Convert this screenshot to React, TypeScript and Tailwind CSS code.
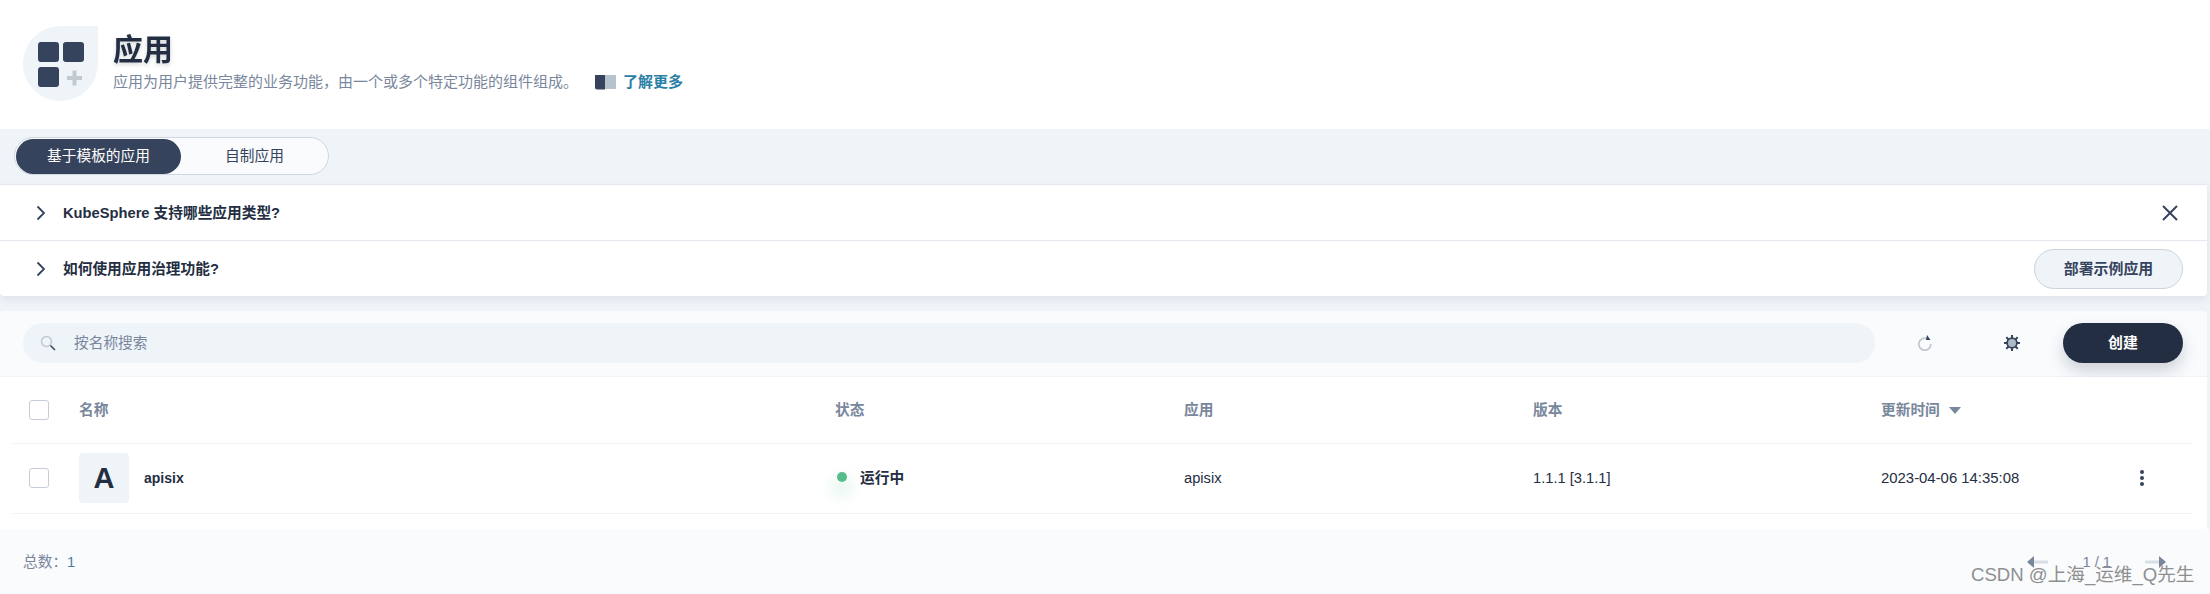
import React from "react";

function Chevron() {
  return (
    <svg width="12" height="16" viewBox="0 0 12 16" fill="none" stroke="#36435c" strokeWidth="1.8" className="shrink-0">
      <path d="M2.5 1.5 9 8l-6.5 6.5" />
    </svg>
  );
}

function Checkbox() {
  return <span className="block w-[20px] h-[20px] rounded-[3px] border border-[#c6cdd8] bg-white" />;
}

const cols = "grid grid-cols-[50px_756px_349px_349px_348px_1fr] items-center pl-[16px]";

export default function App() {
  return (
    <div
      className="w-[2210px] h-[594px] overflow-hidden bg-[#eff4f9] flex flex-col text-[14.7px] text-[#242e42] leading-[20px]"
      style={{ fontFamily: '"Liberation Sans", "Noto Sans CJK SC", sans-serif' }}
    >
      {/* Banner */}
      <header className="h-[129px] shrink-0 bg-white flex items-start pl-[23px] pt-[26px]">
        <div className="relative w-[75px] h-[75px] rounded-full rounded-tr-none bg-[#eff4f9] shrink-0">
          <svg width="75" height="75" viewBox="0 0 75 75" className="block">
            <rect x="15" y="16" width="21" height="20" rx="3" fill="#36435c" />
            <rect x="40" y="16" width="21" height="20" rx="3" fill="#36435c" />
            <rect x="15" y="41" width="21" height="20" rx="3" fill="#36435c" />
            <path d="M44 50h15v4H44zM49.5 44.500h4v15h-4z" fill="#c1c9d1" />
          </svg>
        </div>
        <div className="ml-[15px] flex flex-col">
          <h1 className="text-[30px] leading-[38px] font-bold text-[#242e42] mt-[5px] drop-shadow-[0_2px_2px_rgba(36,46,66,0.2)]">应用</h1>
          <div className="flex items-center mt-[3px] h-[20px]">
            <span className="text-[#79879c] text-[15px]">应用为用户提供完整的业务功能，由一个或多个特定功能的组件组成。</span>
            <svg width="21" height="16" viewBox="0 0 21 16" className="ml-[17px] shrink-0">
              <path d="M0 1h10v14.500H2a2 2 0 0 1-2-2z" fill="#36435c" />
              <path d="M10 1h11v14H10z" fill="#b6c2ce" />
            </svg>
            <span className="ml-[7px] font-bold text-[#2a7fa6] text-[15px]">了解更多</span>
          </div>
        </div>
      </header>

      {/* Tabs band */}
      <div className="h-[55px] shrink-0 pl-[14px] pt-[8px]">
        <div className="w-[315px] h-[38px] rounded-full border border-[#d1d7e0] bg-[#f9fbfd] flex items-center pl-px">
          <span className="w-[165px] h-[35px] rounded-full bg-[#36435c] text-white flex items-center justify-center">基于模板的应用</span>
          <span className="w-[147px] h-[35px] flex items-center justify-center text-[#36435c]">自制应用</span>
        </div>
      </div>

      {/* Help card */}
      <section className="shrink-0 mr-[3px] bg-white border-t border-[#e3e9ef] rounded-b-[4px] shadow-[0_4px_8px_0_rgba(36,46,66,0.08)]">
        <div className="h-[56px] flex items-center pl-[35px] pr-[27px] border-b border-[#e3e9ef]">
          <Chevron />
          <span className="ml-[16px] font-bold">KubeSphere 支持哪些应用类型?</span>
          <svg width="18" height="18" viewBox="0 0 18 18" fill="none" stroke="#36435c" strokeWidth="2" className="ml-auto mr-[1px]">
            <path d="M2 2l14 14M16 2 2 16" />
          </svg>
        </div>
        <div className="h-[55px] flex items-center pl-[35px] pr-[24px]">
          <Chevron />
          <span className="ml-[16px] font-bold">如何使用应用治理功能?</span>
          <button className="ml-auto w-[149px] h-[40px] rounded-full bg-[#eff4f9] border border-[#ccd3db] font-bold text-[#36435c] text-[14.9px]">部署示例应用</button>
        </div>
      </section>

      {/* Toolbar */}
      <section className="mt-[15px] shrink-0 mr-[3px] h-[66px] bg-[#f9fbfd] rounded-t-[4px] border-b border-[#eff4f9] flex items-center pl-[23px] pr-[24px] pb-[1px]">
        <div className="w-[1852px] h-[40px] rounded-full bg-[#eff4f9] flex items-center pl-[17px]">
          <svg width="16" height="16" viewBox="0 0 16 16" fill="none" className="shrink-0">
            <circle cx="6.500" cy="6.500" r="5" stroke="#c1c9d1" strokeWidth="1.500" />
            <path d="M10.500 10.500 15 15" stroke="#36435c" strokeWidth="1.500" />
          </svg>
          <span className="ml-[18px] text-[#79879c]">按名称搜索</span>
        </div>
        <svg width="14" height="16" viewBox="0 0 14 16" fill="none" className="ml-[43px] shrink-0">
          <path d="M9 3.600A6 6 0 1 0 12.800 9" stroke="#c1c9d1" strokeWidth="1.800" />
          <path d="M9 0l3.500 5H8z" fill="#36435c" />
        </svg>
        <svg width="18" height="18" viewBox="0 0 18 18" className="ml-[71px] shrink-0">
          <g stroke="#36435c" strokeWidth="2">
            <path d="M9 1v16M1 9h16M3.300 3.300l11.400 11.400M14.700 3.300 3.300 14.700" />
          </g>
          <circle cx="9" cy="9" r="5.800" fill="#36435c" />
          <circle cx="9" cy="9" r="4" fill="#aeb9c6" />
        </svg>
        <button className="ml-auto w-[120px] h-[40px] rounded-full bg-[#242e42] text-white font-bold text-[14.9px] shadow-[0_8px_16px_0_rgba(36,46,66,0.2)]">创建</button>
      </section>

      {/* Table */}
      <section className="shrink-0 mr-[3px] h-[152px] bg-white">
        <div className="mx-[13px] w-[2180px]">
          <div className={`${cols} h-[67px] border-b border-[#eff1f4] text-[#79879c] font-bold`}>
            <Checkbox />
            <span>名称</span>
            <span>状态</span>
            <span>应用</span>
            <span>版本</span>
            <span className="flex items-center">
              更新时间
              <svg width="12" height="7" viewBox="0 0 12 7" className="ml-[9px]"><path d="M0 0h12L6 7z" fill="#79879c" /></svg>
            </span>
          </div>
          <div className={`${cols} h-[70px] border-b border-[#eff1f4] pb-[1px]`}>
            <Checkbox />
            <div className="flex items-center">
              <span className="w-[50px] h-[50px] rounded-[4px] bg-[#eff4f9] flex items-center justify-center text-[29px] font-bold text-[#242e42]">A</span>
              <span className="ml-[15px] font-bold text-[14px]">apisix</span>
            </div>
            <div className="flex items-center">
              <span className="relative w-[10px] h-[10px] rounded-full bg-[#55bc8a] ml-[2px] mb-[3px] shadow-[0_10px_14px_6px_rgba(85,188,138,0.13)]" />
              <span className="ml-[13px] font-bold">运行中</span>
            </div>
            <span>apisix</span>
            <span>1.1.1 [3.1.1]</span>
            <div className="flex items-center text-[14.9px]">
              <span>2023-04-06 14:35:08</span>
              <svg width="6" height="18" viewBox="0 0 6 18" className="ml-[120px]" fill="#36435c">
                <circle cx="3" cy="3" r="2" /><circle cx="3" cy="9" r="2" /><circle cx="3" cy="15" r="2" />
              </svg>
            </div>
          </div>
        </div>
      </section>

      {/* Footer */}
      <footer className="relative flex-1 bg-[#f9fbfd] flex items-start pl-[23px] pt-[23px]">
        <span className="text-[#79879c]">总数：<span className="text-[#4a7ba8]">1</span></span>
        <div className="ml-auto mr-[44px] flex items-center h-[20px] text-[#79879c]">
          <svg width="21" height="14" viewBox="0 0 21 14">
            <path d="M7 7h14" stroke="#d8dee5" strokeWidth="3" /><path d="M7 1v12L0 7z" fill="#79879c" />
          </svg>
          <span className="mx-[34px] text-[#79879c]">1 / 1</span>
          <svg width="21" height="14" viewBox="0 0 21 14">
            <path d="M0 7h14" stroke="#d8dee5" strokeWidth="3" /><path d="M14 1v12l7-6z" fill="#79879c" />
          </svg>
        </div>
        <span className="absolute left-[1971px] top-[34px] text-[18.600px] leading-[24px] text-[#8f8f8f]">CSDN @上海_运维_Q先生</span>
      </footer>
    </div>
  );
}
